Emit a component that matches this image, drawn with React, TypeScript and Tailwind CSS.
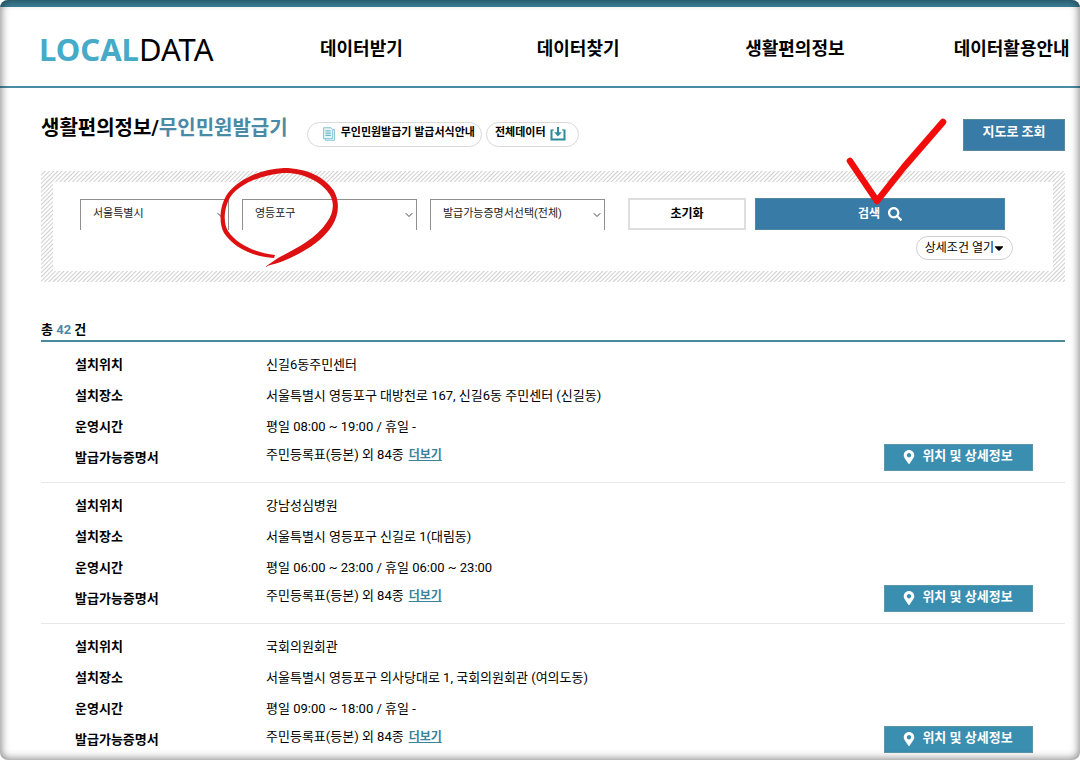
import { ChevronDown } from "lucide-react";
import { FaMapMarkerAlt, FaSearch, FaCaretDown } from "react-icons/fa";

type Kiosk = { name: string; address: string; hours: string; documents: string };

const menu = ["데이터받기", "데이터찾기", "생활편의정보", "데이터활용안내"];

const kiosks: Kiosk[] = [
  {
    name: "신길6동주민센터",
    address: "서울특별시 영등포구 대방천로 167, 신길6동 주민센터 (신길동)",
    hours: "평일 08:00 ~ 19:00 / 휴일 -",
    documents: "주민등록표(등본) 외 84종",
  },
  {
    name: "강남성심병원",
    address: "서울특별시 영등포구 신길로 1(대림동)",
    hours: "평일 06:00 ~ 23:00 / 휴일 06:00 ~ 23:00",
    documents: "주민등록표(등본) 외 84종",
  },
  {
    name: "국회의원회관",
    address: "서울특별시 영등포구 의사당대로 1, 국회의원회관 (여의도동)",
    hours: "평일 09:00 ~ 18:00 / 휴일 -",
    documents: "주민등록표(등본) 외 84종",
  },
];

function Header() {
  return (
    <header className="flex h-[88px] items-center overflow-hidden border-t-[7px] border-b-2 border-t-[#3b8099] border-b-[#4b8ba3] pt-1 pl-[39px]">
      <a
        href="#"
        className="w-[214px] shrink-0 font-['Noto_Sans',sans-serif] text-[31px] leading-10 text-black"
      >
        <span className="font-bold text-[#45abc9]">LOCAL</span>
        <span>DATA</span>
      </a>
      <nav className="-mr-10 grid flex-1 grid-cols-4">
        {menu.map((label) => (
          <a key={label} href="#" className="text-center text-lg font-bold whitespace-nowrap">
            {label}
          </a>
        ))}
      </nav>
    </header>
  );
}

function DocumentIcon() {
  return (
    <svg viewBox="0 0 14 16" className="h-3.5 w-3" fill="none" stroke="#6fb9c9">
      <path d="M3 13.5v1.8h10.3V3h-2" />
      <path d="M.7.7h8.6l2 2v10.8H.7z" fill="#e6f6f8" />
      <path d="M2.8 4.4h6M2.8 7h6.4M2.8 9.6h6.4" stroke="#3d9db2" />
    </svg>
  );
}

function DownloadIcon() {
  return (
    <svg viewBox="0 0 16 14" className="h-3.5 w-4" fill="none" stroke="#2d8a9b" strokeWidth="2">
      <path d="M4 3H2" strokeWidth="1" />
      <path d="M12 3h2" strokeWidth="1" />
      <path d="M1.5 2.5v10h13v-10" />
      <path d="M8 0v8" />
      <path d="M4.2 5.2h7.6L8 9.4z" fill="#2d8a9b" stroke="none" />
    </svg>
  );
}

function TitleBar() {
  return (
    <div className="flex items-start">
      <h1 className="text-xl leading-7 font-bold whitespace-nowrap">
        생활편의정보/<span className="text-[#4b8aa5]">무인민원발급기</span>
      </h1>
      <div className="mt-2 ml-[19px] flex gap-1">
        <button className="flex h-[25px] items-center gap-1.5 rounded-full border border-[#d9d9d9] pr-1.5 pl-[15px] pb-0.5 text-[11px] font-bold whitespace-nowrap">
          <DocumentIcon />
          무인민원발급기 발급서식안내
        </button>
        <button className="flex h-[25px] items-center gap-1 rounded-full border border-[#d9d9d9] pr-3 pl-2 pb-0.5 text-[11px] font-bold whitespace-nowrap">
          전체데이터
          <DownloadIcon />
        </button>
      </div>
      <button className="mt-[5px] ml-auto h-8 w-[102px] border border-[#5a8a9c] bg-[#397ba7] pb-1.5 text-[13px] leading-5 font-bold text-white">
        지도로 조회
      </button>
    </div>
  );
}

function Dropdown({ label, value, width }: { label: string; value: string; width: string }) {
  return (
    <div className={`relative ${width}`}>
      <select
        aria-label={label}
        className="h-[31px] w-full appearance-none border border-b-0 border-[#8f8f8f] bg-white pr-4 pl-3 text-[11px] text-[#222]"
      >
        <option>{value}</option>
      </select>
      <ChevronDown
        className="pointer-events-none absolute top-2.5 right-0.5 size-3 text-[#444]"
        strokeWidth={2}
      />
    </div>
  );
}

function CircleMark() {
  return (
    <svg
      viewBox="0 0 140 115"
      className="pointer-events-none absolute -top-[39px] -left-8 z-10 h-[115px] w-[140px] max-w-none"
      fill="#dd1111"
    >
      <path d="M65 95C48 93 28 86 18 71C12 61 15 45 21 36C31 23 52 15 73 13C94 12 113 23 120 35C125 44 123 54 117 62C106 79 85 89 68 98L55 107C62 104 70 103 78 99C96 91 113 80 122 66C129 55 130 42 124 31C115 17 96 8 74 8C50 9 28 20 18 33C10 44 8 62 14 73C24 88 44 97 64 98Z" />
    </svg>
  );
}

function CheckMark() {
  return (
    <svg
      viewBox="0 0 115 100"
      className="pointer-events-none absolute -top-[88px] left-[85px] h-[100px] w-[115px]"
      fill="none"
      stroke="#f20d0d"
      strokeLinecap="round"
      strokeLinejoin="round"
    >
      <path d="M10 51L37 91L64 57L103 12" strokeWidth="6.5" />
    </svg>
  );
}

function SearchPanel() {
  return (
    <section className="mt-5 bg-[repeating-linear-gradient(135deg,#cfcfcf_0px,#fff_1px,#fff_2px,#cfcfcf_3px)] px-3 py-[11px]">
      <form
        className="bg-white pt-4 pr-10 pb-[11px] pl-[27px]"
        onSubmit={(e) => e.preventDefault()}
      >
        <div className="flex items-center">
          <Dropdown label="시도" value="서울특별시" width="w-[149px]" />
          <div className="relative ml-[13px]">
            <Dropdown label="시군구" value="영등포구" width="w-[175px]" />
            <CircleMark />
          </div>
          <div className="ml-[13px]">
            <Dropdown label="증명서" value="발급가능증명서선택(전체)" width="w-[175px]" />
          </div>
          <button
            type="reset"
            className="ml-[23px] h-8 w-[118px] border-2 border-[#dedede] bg-white text-xs font-bold"
          >
            초기화
          </button>
          <div className="relative mr-2 ml-[9px] flex-1">
            <button
              type="submit"
              className="flex h-8 w-full items-center justify-center gap-2 border border-[#4f86a0] bg-[#397ba7] text-xs font-bold text-white"
            >
              검색
              <FaSearch className="size-3.5" />
            </button>
            <CheckMark />
          </div>
        </div>
        <div className="mt-1.5 flex justify-end">
          <button
            type="button"
            className="flex h-6 items-center rounded-full border border-[#cfcfcf] pr-1.5 pl-2 text-xs whitespace-nowrap"
          >
            상세조건 열기
            <FaCaretDown className="-ml-0.5 size-3.5" />
          </button>
        </div>
      </form>
    </section>
  );
}

function KioskItem({ kiosk }: { kiosk: Kiosk }) {
  return (
    <li className="flex items-end border-b border-[#e8e8e8] pt-[7px] pr-8 pb-[9px] pl-[34px] last:border-b-0 last:pb-0">
      <dl className="grid flex-1 grid-cols-[191px_1fr] text-[13px] leading-[31px]">
        <dt className="font-bold">설치위치</dt>
        <dd>{kiosk.name}</dd>
        <dt className="font-bold">설치장소</dt>
        <dd>{kiosk.address}</dd>
        <dt className="font-bold">운영시간</dt>
        <dd>{kiosk.hours}</dd>
        <dt className="font-bold">발급가능증명서</dt>
        <dd className="leading-[26px]">
          {kiosk.documents}
          <a href="#" className="ml-[5px] text-xs font-bold text-[#3b829b] underline">
            더보기
          </a>
        </dd>
      </dl>
      <button className="mb-0.5 flex h-[27px] w-[149px] items-center justify-center gap-1.5 border border-[#5a97ab] bg-[#3a8eb0] pr-0.5 pb-1 text-[13px] font-bold text-white">
        <FaMapMarkerAlt className="mt-0.5 size-3.5" />
        위치 및 상세정보
      </button>
    </li>
  );
}

export default function App() {
  return (
    <div className="relative min-h-screen bg-white font-[Roboto,'Noto_Sans_CJK_KR',sans-serif] text-black">
      <Header />
      <main className="pt-[26px] pr-[15px] pl-[41px]">
        <TitleBar />
        <SearchPanel />
        <p className="mt-[38px] border-b-2 border-[#4b8a9d] text-[13px] leading-5 font-bold">
          총 <span className="text-[#4b8aa5]">42</span> 건
        </p>
        <ul>
          {kiosks.map((kiosk) => (
            <KioskItem key={kiosk.name} kiosk={kiosk} />
          ))}
        </ul>
      </main>
      <div className="pointer-events-none fixed inset-0 z-20 rounded-lg shadow-[inset_0_0_8px_1px_rgba(0,0,0,0.5),0_0_0_8px_#fff]" />
    </div>
  );
}
